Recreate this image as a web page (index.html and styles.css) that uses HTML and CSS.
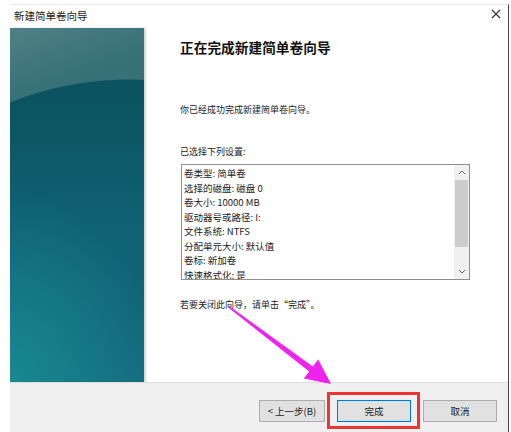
FILE: index.html
```html
<!DOCTYPE html>
<html lang="zh-CN">

<head>
    <meta charset="UTF-8" />
    <title>新建简单卷向导</title>
    <link rel="stylesheet" href="styles.css">
</head>

<body>

    <div class="window">
        <div class="titlebar">
            <span class="title">新建简单卷向导</span>
            <svg class="close" width="10" height="10" viewBox="0 0 10 10">
                <path d="M1 1 L9 9 M9 1 L1 9" stroke="#333" stroke-width="1.1" fill="none" />
            </svg>
        </div>

        <div class="main">
            <div class="side"></div>
            <div class="content">
                <h1 class="heading">正在完成新建简单卷向导</h1>
                <p class="text done">你已经成功完成新建简单卷向导。</p>
                <p class="text chosen">已选择下列设置:</p>

                <div class="listbox">
                    <div class="lines">
                        <div>卷类型: 简单卷</div>
                        <div>选择的磁盘: 磁盘 0</div>
                        <div>卷大小: 10000 MB</div>
                        <div>驱动器号或路径: I:</div>
                        <div>文件系统: NTFS</div>
                        <div>分配单元大小: 默认值</div>
                        <div>卷标: 新加卷</div>
                        <div>快速格式化: 是</div>
                    </div>
                    <div class="scrollbar">
                        <svg class="arrow" width="8" height="5" viewBox="0 0 8 5">
                            <path d="M1 4 L4 1 L7 4" stroke="#606060" stroke-width="1" fill="none" />
                        </svg>
                        <div class="thumb"></div>
                        <div class="track"></div>
                        <svg class="arrow" width="8" height="5" viewBox="0 0 8 5">
                            <path d="M1 1 L4 4 L7 1" stroke="#606060" stroke-width="1" fill="none" />
                        </svg>
                    </div>
                </div>

                <p class="text close-hint">若要关闭此向导，请单击“完成”。</p>
            </div>
        </div>

        <div class="footer">
            <button class="btn back">&lt; 上一步(B)</button>
            <button class="btn finish">完成</button>
            <button class="btn cancel">取消</button>
        </div>
    </div>

    <!-- annotation drawn over the screenshot -->
    <div class="mark"></div>
    <svg class="pointer" width="511" height="432" viewBox="0 0 511 432">
        <polygon fill="#f022f0"
            points="229.5,306.2 312.8,366.6 318.2,359.4 331,384 303.8,378.6 309.2,371.4 228.5,307.8" />
    </svg>

</body>

</html>
```

FILE: styles.css
```css
* {
    margin: 0;
    padding: 0;
    box-sizing: border-box;
}

body {
    width: 511px;
    height: 432px;
    overflow: hidden;
    background-color: #fff;
    font-family: "Noto Sans CJK SC", "Liberation Sans", sans-serif;
    color: #1a1a1a;
    position: relative;
}

.window {
    margin: 4px 0 0 10px;
    width: 499px;
    height: 428px;
    border-top: 1px solid #e6e6e6;
    border-right: 1px solid #444;
    display: flex;
    flex-direction: column;
    background-color: #fff;
}

.titlebar {
    height: 23px;
    display: flex;
    justify-content: space-between;
    align-items: center;
    padding: 0 7px 0 4px;
}

.title {
    font-size: 10.5px;
    color: #222;
    line-height: 12px;
    margin-top: -2px;
}

.close {
    margin-top: -5px;
}

.main {
    height: 354px;
    display: flex;
}

.side {
    width: 134px;
    flex: none;
    box-shadow: 2px 0 2px rgba(0, 0, 0, 0.18);
    background:
        radial-gradient(250px 187px at 120px 238px, rgba(0, 0, 0, 0) 99.4%, rgba(140, 170, 160, 0.34) 100%),
        linear-gradient(160deg, rgba(255, 255, 255, 0.14) 0%, rgba(255, 255, 255, 0) 18%),
        radial-gradient(ellipse 150px 190px at 0% 100%, rgba(26, 145, 148, 0.8), rgba(26, 145, 148, 0)),
        linear-gradient(to bottom, #0b5361 20%, #0f6173 55%, #14697f 100%);
}

.content {
    flex: 1;
    padding: 10px 0 0 36px;
    display: flex;
    flex-direction: column;
}

.heading {
    font-size: 13.7px;
    font-weight: bold;
    color: #111;
    line-height: 18px;
}

.text {
    font-size: 9px;
    line-height: 12px;
}

.done {
    margin-top: 48px;
}

.chosen {
    margin-top: 30px;
}

.listbox {
    margin-top: 6px;
    margin-left: 1px;
    width: 289px;
    height: 116px;
    border: 1px solid #8f8f8f;
    display: flex;
    overflow: hidden;
}

.lines {
    flex: 1;
    padding: 1px 0 0 2px;
    font-size: 9.5px;
    line-height: 14.5px;
    color: #1a1a1a;
    overflow: hidden;
}

.scrollbar {
    width: 15px;
    flex: none;
    background-color: #f0f0f0;
    display: flex;
    flex-direction: column;
    align-items: center;
}

.arrow {
    margin: 5px 0;
}

.thumb {
    width: 13px;
    height: 67px;
    background-color: #cdcdcd;
}

.track {
    flex: 1;
}

.close-hint {
    margin-top: 19px;
}

.footer {
    flex: 1;
    background-color: #f0f0f0;
    border-top: 1px solid #dcdcdc;
    display: flex;
    justify-content: flex-end;
    padding: 17px 11px 0 0;
    gap: 12px;
}

.btn {
    height: 22px;
    width: 74px;
    border: 1px solid #adadad;
    background-color: #e1e1e1;
    font-family: "Noto Sans CJK SC", "Liberation Sans", sans-serif;
    font-size: 9.5px;
    color: #1a1a1a;
}

.back {
    width: 66px;
}

.finish {
    border: 1px solid #0078d7;
    box-shadow: inset 0 0 0 1px #cce4f7;
}

.mark {
    position: absolute;
    left: 327px;
    top: 392px;
    width: 93px;
    height: 37px;
    border: 3px solid #ee3535;
}

.pointer {
    position: absolute;
    left: 0;
    top: 0;
    pointer-events: none;
}
```
